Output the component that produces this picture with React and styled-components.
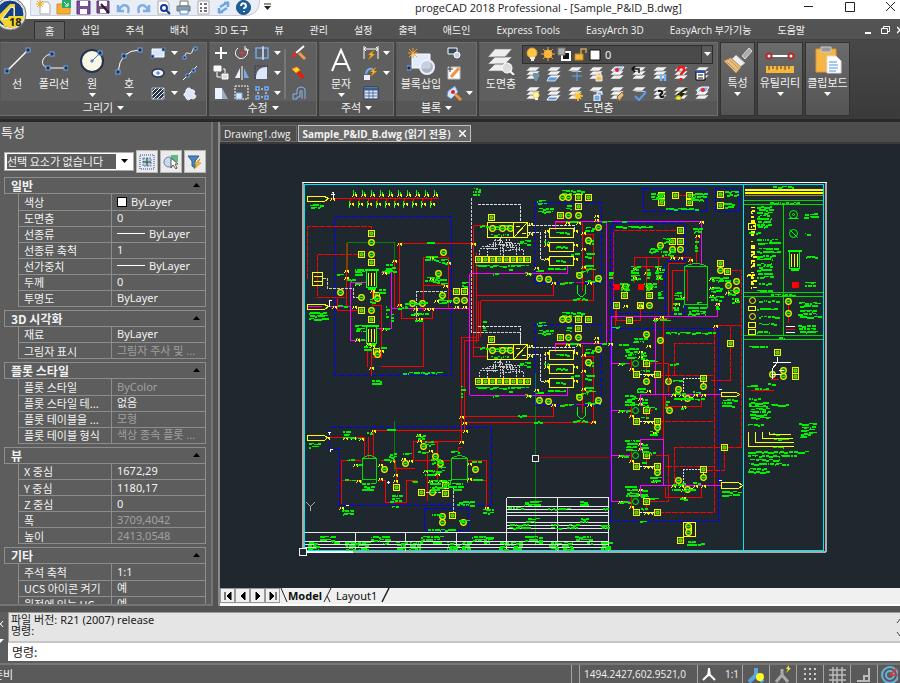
import React from "react";
import styled, { createGlobalStyle, css } from "styled-components";

const latin = '"Noto Sans", "Noto Sans CJK KR", sans-serif';
const compact = '"Open Sans", "Noto Sans CJK KR", sans-serif';
const korean = '"Noto Sans CJK KR", "Noto Sans", sans-serif';

const Global = createGlobalStyle`
  *, *::before, *::after { box-sizing: border-box; }
  html, body { margin: 0; background: #535353; }
  button, select, input { font: inherit; color: inherit; border: 0; padding: 0; margin: 0; background: none; border-radius: 0; }
  svg { display: block; flex: none; }
`;

/* ---------- shell ---------- */

const Shell = styled.div`
  display: grid;
  grid-template-rows: 19px 21px 82px minmax(0, 1fr) 51px 20px;
  height: 100vh;
  overflow: hidden;
  color: #f2f2f2;
  font: 11px/16px ${latin};
`;

const TitleBar = styled.header`
  position: relative;
  display: flex;
  align-items: flex-start;
  background: #fff;
  color: #222;
`;
const AppButton = styled.button`
  position: absolute;
  z-index: 2;
  left: -7px;
  top: -4px;
`;
const QuickAccess = styled.div`
  display: flex;
  align-items: center;
  gap: 5px;
  height: 16px;
  margin-left: 30px;
  padding: 0 8px 0 5px;
  background: #e9edf5;
  border: 1px solid #c9ced8;
  border-top: 0;
  border-radius: 0 0 14px 0;
`;
const QuickCaret = styled.button`
  margin: 3px 0 0 4px;
`;
const Title = styled.h1`
  flex: 1;
  margin: 0;
  padding-left: 144px;
  font: 11px/15px ${compact};
  white-space: nowrap;
`;
const WindowButtons = styled.div`
  display: flex;
  gap: 28px;
  padding-right: 3px;
`;

const TabStrip = styled.nav`
  display: flex;
  align-items: flex-end;
  padding-left: 34px;
  background: #535353;
  border-bottom: 1px solid #444;
  overflow: hidden;
  font: 10px/16px ${compact};
`;
const RibbonTab = styled.button`
  height: 18px;
  padding: 0 13px !important;
  line-height: 16px;
  white-space: nowrap;
  ${(p) =>
    p.$active &&
    css`
      padding: 0 10px !important;
      margin-right: 3px !important;
      background: #5f5f5f !important;
      border: 1px solid #303030 !important;
      border-bottom: 0 !important;
    `}
`;
const MdiButtons = styled.div`
  display: flex;
  gap: 7px;
  margin-left: auto;
  padding-bottom: 4px;
`;

const Ribbon = styled.div`
  display: flex;
  gap: 2px;
  padding: 2px 0 3px;
  background: linear-gradient(#484848, #3a3a3a);
  border-bottom: 3px solid #292929;
`;
const Panel = styled.section`
  display: flex;
  flex-direction: column;
  flex: none;
  width: ${(p) => p.$w}px;
  background: #5f5f5f;
  border: 1px solid #6f6f6f;
  border-left-color: #575757;
`;
const PanelBody = styled.div`
  flex: 1;
  display: flex;
  min-height: 0;
`;
const PanelTitle = styled.button`
  height: 14px;
  line-height: 14px;
  background: #565656 !important;
  display: flex;
  align-items: center;
  justify-content: center;
  gap: 4px;
`;
const BigTool = styled.button`
  width: ${(p) => p.$w || 38}px;
  flex: none;
  height: 60px;
  display: flex;
  flex-direction: column;
  align-items: center;
  white-space: nowrap;
  line-height: 14px;
  gap: 2px;
  padding-top: 4px !important;
`;
const IconGrid = styled.div`
  display: grid;
  grid-template-columns: ${(p) => p.$cols};
  grid-auto-rows: 20px;
  place-items: center;
  height: 60px;
`;
const Sep = styled.i`
  width: 2px;
  height: 50px;
  margin: 6px 4px 0 0;
  background: #777;
`;
const LayerTools = styled.div`
  flex: 1;
  padding-right: 4px;
`;
const LayerBox = styled.label`
  display: flex;
  align-items: center;
  gap: 1px;
  height: 19px;
  margin: 2px 0 0;
  padding-left: 2px;
  background: #4a4a4a;
  border: 1px solid #2d2d2d;
  select { flex: 1; appearance: none; padding-left: 3px; font: 11px/16px ${latin}; }
`;
const DropMark = styled.span`
  display: grid;
  place-items: center;
  width: 11px;
  height: 17px;
  background: #5a5a5a;
  border-left: 1px solid #2d2d2d;
`;
const TallTool = styled.button`
  display: flex;
  flex-direction: column;
  align-items: center;
  flex: none;
  width: ${(p) => p.$w}px;
  gap: 2px;
  padding-top: 3px !important;
  line-height: 14px;
  white-space: nowrap;
  background: linear-gradient(#6b6b6b, #545454) !important;
  border: 1px solid #333 !important;
`;

/* ---------- work area ---------- */

const Work = styled.div`
  display: grid;
  grid-template-columns: 213px minmax(0, 1fr);
  column-gap: 5px;
  min-height: 0;
  padding-bottom: 6px;
  background: #535353;
`;
const Props = styled.aside`
  display: flex;
  flex-direction: column;
  min-height: 0;
  overflow: hidden;
  padding: 0 5px 0 4px;
  background: #5d5d5d;
  border-right: 2px solid #757575;
  border-bottom: 2px solid #757575;
  font: 11px/15px ${korean};
`;
const PropsTitle = styled.h2`
  margin: 0 0 0 -3px;
  font: 13px/20px ${korean};
  height: 28px;
  flex: none;
`;
const PickRow = styled.div`
  display: flex;
  flex: none;
  gap: 2px;
  margin-bottom: 4px;
`;
const PickBox = styled.label`
  display: flex;
  flex: 1;
  align-items: center;
  height: 19px;
  margin: 2px 0 0;
  background: #fff;
  border: 1px solid #aaa;
  select { flex: 1; min-width: 0; appearance: none; height: 15px; margin: 0 0 0 2px; line-height: 15px; background: #5d5d5d; }
  svg { margin: 0 5px; }
`;
const PickButton = styled.button`
  display: grid;
  place-items: center;
  width: 22px;
  height: 23px;
  background: #eceaea !important;
  border: 1px solid #b5b5b5 !important;
`;
const Group = styled.section`
  margin-bottom: 3px;
  flex: none;
`;
const GroupHead = styled.button`
  display: flex;
  justify-content: space-between;
  align-items: center;
  width: 100%;
  height: 17px;
  padding: 0 5px 0 6px !important;
  font-weight: 700 !important;
  font-size: 12px !important;
  border: 1px solid #8d8d8d !important;
`;
const Grid = styled.table`
  width: calc(100% - 14px);
  margin-left: 14px;
  table-layout: fixed;
  border-collapse: collapse;
  th, td {
    height: 16px;
    padding: 0 0 0 5px;
    border: 1px solid #8d8d8d;
    border-top: 0;
    font-weight: 400;
    line-height: 14px;
    text-align: left;
    white-space: nowrap;
    overflow: hidden;
    text-overflow: ellipsis;
  }
  th { width: 93px; }
`;
const Value = styled.td`
  color: ${(p) => (p.$dim ? "#a0a0a0" : "#f2f2f2")};
  font-family: ${latin};
`;
const Swatch = styled.i`
  display: inline-block;
  width: 10px;
  height: 10px;
  margin-right: 4px;
  vertical-align: -1px;
  background: #fff;
  border: 1px solid #000;
`;
const Rule = styled.i`
  display: inline-block;
  width: 28px;
  height: 1px;
  margin-right: 4px;
  vertical-align: 4px;
  background: #fff;
`;

const Doc = styled.main`
  display: grid;
  grid-template-rows: 22px minmax(0, 1fr) 18px;
  min-height: 0;
  border-left: 2px solid #8a8a8a;
`;
const DocTabs = styled.div`
  display: flex;
  align-items: flex-end;
  background: #4d4d4d;
  border-bottom: 2px solid #3a3a3a;
  font: 10px/16px ${compact};
`;
const DocTab = styled.button`
  display: flex;
  align-items: center;
  gap: 8px;
  height: 17px;
  padding: 0 6px 0 3px !important;
  line-height: 16px;
  white-space: nowrap;
  border: 1px solid #6a6a6a !important;
  ${(p) =>
    p.$active &&
    css`
      margin-left: 1px !important;
      padding: 0 4px 0 3px !important;
      font-weight: 700 !important;
      background: #686868 !important;
      border-color: #c0c0c0 !important;
    `}
`;
const Canvas = styled.div`
  min-height: 0;
  overflow: hidden;
  background: #1f272f;
  svg { width: 100%; height: 100%; }
`;
const LayoutTabs = styled.div`
  display: flex;
  align-items: flex-start;
  background: #f0f0f0;
  color: #111;
  border-bottom: 2px solid #fff;
`;
const NavButton = styled.button`
  display: grid;
  place-items: center;
  width: 15px;
  height: 15px;
  border: 1px solid #999 !important;
  background: #f0f0f0 !important;
`;
const LayoutTab = styled.button`
  height: 15px;
  line-height: 15px;
  font-weight: ${(p) => (p.$active ? 700 : 400)} !important;
`;

const Command = styled.section`
  display: grid;
  grid-template-columns: 8px minmax(0, 1fr);
  grid-template-rows: 31px 18px;
  padding-bottom: 2px;
  background: #5d5d5d;
  color: #222;
  font: 11px/11px ${latin};
`;
const CommandGrip = styled.div`
  grid-row: span 2;
  display: flex;
  flex-direction: column;
  gap: 12px;
  padding-top: 9px;
`;
const History = styled.output`
  display: flex;
  justify-content: space-between;
  padding: 1px 0 0 2px;
  white-space: pre;
  background: #e5e5e5;
  border: 1px solid #999;
  border-right: 0;
  border-bottom: 2px solid #c6c6c6;
`;
const Prompt = styled.label`
  display: flex;
  align-items: center;
  padding-left: 4px;
  background: #fff;
  font: 12px/16px ${korean};
  input { flex: 1; outline: 0; }
`;
const Status = styled.footer`
  display: flex;
  align-items: stretch;
  background: #5a5a5a;
  border-top: 2px solid #777;
  overflow: hidden;
`;
const Ready = styled.span`
  flex: 1;
  margin-left: -7px;
  font: 11px/18px ${korean};
`;
const StatusCell = styled.button`
  display: flex;
  align-items: center;
  justify-content: ${(p) => (p.$coord ? "flex-start" : "center")};
  flex: none;
  gap: 8px;
  width: ${(p) => p.$w}px;
  padding-left: ${(p) => (p.$coord ? 4 : 0)}px !important;
  border-left: 1px solid #a5a5a5 !important;
  font: 10px/16px ${compact} !important;
  white-space: nowrap;
`;

/* ---------- icons ---------- */

const Svg = ({ s = 16, w, h, children }) => (
  <svg width={w || s} height={h || s} viewBox={`0 0 ${w || s} ${h || s}`} fill="none" stroke="#fff" aria-hidden="true">
    {children}
  </svg>
);
const Caret = ({ c = "#fff", up }) => (
  <Svg w={7} h={5}><path d={up ? "M0 4h7L3.500 0z" : "M0 0h7L3.500 4z"} fill={c} stroke="none" /></Svg>
);
const Grip = ({ x, y }) => <rect x={x - 2} y={y - 2} width="4" height="4" fill="#222c40" stroke="#6ba6f5" />;

const LineIcon = () => <Svg s={28}><path d="M4 24L24 4" strokeWidth="1.500" /><Grip x={4} y={24} /><Grip x={25} y={3} /></Svg>;
const PolyIcon = () => <Svg s={28}><path d="M12 7C1 8-1 20 9 21H26" /><Grip x={12} y={7} /><Grip x={8} y={21} /><Grip x={26} y={21} /></Svg>;
const CircleIcon = () => <Svg s={28}><circle cx="14" cy="14" r="11" fill="#f8f6e4" stroke="#26334c" strokeWidth="2" /><path d="M14 14l7-7M12 14h4M14 12v4" stroke="#3b75bb" /><Grip x={22} y={6} /></Svg>;
const ArcIcon = () => <Svg s={28}><path d="M3 25Q5 3 25 3" /><Grip x={3} y={25} /><Grip x={9} y={9} /><Grip x={25} y={3} /></Svg>;
const RectI = () => <Svg><path d="M2 4h12v8H2z" fill="#d6e5fb" /><path d="M12 3h3v3h-3zM1 10h3v3H1z" fill="#222c40" stroke="#6ba6f5" strokeWidth=".7" /></Svg>;
const SplineI = () => <Svg><path d="M3 13C3 3 8 12 10 7s1-4 4-4" /><path d="M1 11h3v3H1zM12 2h3v3h-3z" fill="#222c40" stroke="#6ba6f5" /></Svg>;
const EllipseI = () => <Svg><ellipse cx="8" cy="8" rx="6" ry="4" fill="#edf4ff" stroke="#29364d" strokeWidth="1.500" /><path d="M8 6v4M6 8h4" stroke="#3277c9" /></Svg>;
const XLineI = () => <Svg><path d="M1 15L15 1" /><path d="M4 9h3v3H4zM10 4h3v3h-3z" fill="#222c40" stroke="#6ba6f5" /></Svg>;
const HatchI = () => <Svg><path d="M2 3h12v11H2z" fill="#26334c" stroke="#dce6f5" strokeWidth=".7" /><path d="M2 7l4-4M2 11l8-8M3 14L14 3M7 14l7-7M11 14l3-3" /></Svg>;
const CloudI = () => <Svg><path d="M4 12c-4-2-1-5 0-4-1-6 5-6 5-3 5-1 4 4 2 4 6 1 1 7-2 4-2 3-5 2-5-1z" fill="#d9e6fb" /></Svg>;
const MoveI = () => <Svg><path d="M8 2v12M2 8h12" strokeWidth="2" /></Svg>;
const RotateI = () => <Svg><path d="M4 3c-7 6 2 15 8 8 2-2 2-6 0-8" /><path d="M8 5v6M5 8h6" stroke="#f33" /><path d="M11 1v4h4" /></Svg>;
const TrimI = () => <Svg><path d="M2 3h7v10H2zM9 3h5v10H9" stroke="#6fa8ee" strokeWidth="1.500" /><path d="M9 1v14" /></Svg>;
const CopyI = () => <Svg><path d="M1 1h7v5H1z" fill="#fff" /><path d="M9 9h6v5H9z" fill="#ddd" /><path d="M4 7v5h4M10 4h2v4" /></Svg>;
const MirrorI = () => <Svg><path d="M6 3v10H1z" fill="#eaf1fd" stroke="none" /><path d="M10 3v10h5z" fill="#78a9e7" stroke="none" /><path d="M8 1v14" /></Svg>;
const FilletI = () => <Svg><path d="M2 14V11Q3 2 13 2v12z" fill="#dbe7fa" stroke="none" /><path d="M1 14V1h13" stroke="#263b5a" strokeDasharray="2 1" /></Svg>;
const StretchI = () => <Svg><path d="M2 3h7v11H2z" fill="#edf3ff" stroke="none" /><path d="M9 3l6 11H9" fill="#9aabc2" stroke="none" /></Svg>;
const ScaleI = () => <Svg><path d="M1 1h13v13H1z" strokeDasharray="2 1" /><path d="M2 8h6v6H2z" fill="#d9e8ff" stroke="#78a9e7" /></Svg>;
const ArrayI = () => <Svg><path d="M2 2h3v3H2zM11 2h3v3h-3zM2 11h3v3H2zM11 11h3v3h-3z" fill="#27446f" stroke="#75acf4" strokeWidth="1.500" /><path d="M7 4h2M7 12h2M4 7v2M12 7v2" /></Svg>;
const EraseI = () => <Svg><path d="M8 8l6 6" stroke="#f6984c" strokeWidth="3" /><path d="M5 8l8-7" stroke="#fff" strokeWidth="2" /><path d="M1 12l4-4" stroke="#e32c25" strokeWidth="3" /></Svg>;
const ExplodeI = () => <Svg><path d="M4 3l8 10" stroke="#d21" strokeWidth="4" /><path d="M1 4l5-2 3 3-4 3z" fill="#ffd22e" stroke="#f80" /></Svg>;
const OffsetI = () => <Svg><path d="M2 14V9h4V4q4-4 8 0v10M6 14v-2h3V6q2-1 2 0v8M2 14h4" stroke="#87b7f2" /></Svg>;
const TextA = () => <Svg s={28}><path d="M5 24L14 3l9 21M8 17h12" strokeWidth="2" /></Svg>;
const Bolt = ({ x = 8, y = 5 }) => <path d={`M${x + 4} ${y}l-6 5h3l-3 5 7-6h-3z`} fill="#ffc22e" stroke="#b16c00" strokeWidth=".5" />;
const DimI = () => <Svg><path d="M1 1v13M15 1v13M1 4h14M3 2L1 4l2 2M13 2l2 2-2 2" /><Bolt x={7} y={5} /></Svg>;
const LeaderI = () => <Svg><path d="M1 10h6v5H1z" fill="#e6effc" stroke="none" /><path d="M3 9q1-6 7-5" stroke="#75adf2" strokeWidth="2" /><Bolt x={9} y={2} /></Svg>;
const TableI = () => <Svg><path d="M1 2h14v12H1z" fill="#dce8fa" stroke="#263958" /><path d="M1 4h14" stroke="#3b5f93" strokeWidth="3" /><path d="M2 8h12M2 11h12M6 5v9M10 5v9" stroke="#5b7298" /></Svg>;
const BlockBig = () => <Svg s={28}><path d="M5 7h18v14H5z" fill="#dfeafa" /><circle cx="20" cy="20" r="7" fill="#becbdc" fillOpacity=".8" stroke="#eef" strokeWidth="2" /><path d="M6 1v10M1 6h10M2 2l8 8M10 2l-8 8" stroke="#f9a42f" /><Grip x={2} y={21} /></Svg>;
const BlockI = () => <Svg><path d="M2 3h9v6H2z" fill="#37465f" /><circle cx="11" cy="10" r="3" fill="#c6d2e2" /></Svg>;
const EditI = () => <Svg><path d="M2 2h12v12H2z" fill="#fff" stroke="#bbb" /><path d="M5 12l8-9" stroke="#f2913d" strokeWidth="3" /><path d="M4 1v6M2 4h5" stroke="#333" /></Svg>;
const AttrI = () => <Svg><path d="M2 6l7-5 3 6-7 7-4-3z" fill="#d6e5fc" stroke="#5e91dc" /><circle cx="7" cy="7" r="2" fill="#d22" stroke="none" /><path d="M9 9l6 6" stroke="#f2913d" strokeWidth="3" /></Svg>;
const sheets = (
  <g fill="#f1f1f1" stroke="#606060" strokeWidth=".5">
    <path d="M1 13l4-4h10l-4 4z" /><path d="M1 9l4-4h10l-4 4z" /><path d="M1 5l4-4h10l-4 4z" />
  </g>
);
const LayersBig = () => <Svg s={28}><g fill="#eee" stroke="#777" strokeWidth=".6"><path d="M1 24l7-7h17l-7 7zM1 17l7-7h17l-7 7zM1 10l7-8h17l-7 8z" /></g><circle cx="20" cy="21" r="5" fill="#ddd" /><path d="M23 24l4 4" strokeWidth="2" /></Svg>;
const layerMarks = [
  <path d="M8 7h6v3l-2 5h-2l-2-5z" fill="#6e94a8" stroke="none" />,
  <path d="M3 11h9l-3 4H1z" fill="#5c9bea" stroke="#fff" strokeWidth=".7" />,
  <g><path d="M0 6h16v10H0z" fill="#5f5f5f" stroke="none" /><path d="M10 5v10M5 10h10" stroke="#61a7ff" /></g>,
  <path d="M8 10h6v5H8zM9 10V7h4v3" fill="#f5c35e" stroke="#eee" />,
  <g><path d="M3 5l3-4h9l-3 4z" fill="#8ab6ef" /><circle cx="8" cy="4" r="2" fill="#e22" stroke="none" /></g>,
  <path d="M1 3h7v4M4 0L1 3l3 3" stroke="#111" strokeWidth="1.500" />,
  <path d="M9 8v7M13 8v7" stroke="#77b3ef" strokeWidth="2.500" />,
  <path d="M5 5c0-5 7-5 6-1 0 3-3 2-3 5M8 12v3" stroke="#f11" strokeWidth="2.500" />,
  <g><path d="M2 5h9v9H2z" fill="#fff" stroke="#000" /><path d="M2 6h9" stroke="#1559c8" strokeWidth="2" /><path d="M4 9h5M4 12h5" stroke="#111" /></g>,
  <g><circle cx="11" cy="9" r="3" fill="#fff5a4" stroke="#e9d75a" /><path d="M10 13h3" strokeWidth="2" /></g>,
  <path d="M3 11h9l-2 3H1z" fill="#4f92e3" />,
  <path d="M11 6v9M7 10h9M8 7l6 6M14 7l-6 6" stroke="#ffc52e" strokeWidth="1.500" />,
  <g><path d="M0 6h16v10H0z" fill="#5f5f5f" stroke="none" /><path d="M6 9h6v6H6zM9 9V6h5v3" fill="#79a9e5" /></g>,
  <path d="M13 6l-5 5 2 4 5-6z" fill="#e7bd7e" stroke="#8b673b" />,
  <g><path d="M0 6h16v10H0z" fill="#5f5f5f" stroke="none" /><path d="M4 10l4 4 7-8" stroke="#5a9dee" strokeWidth="2" /></g>,
  <path d="M6 5c5-1 5 2 3 3s0 5 3 2" stroke="#111" strokeWidth="2" />,
  <g><path d="M14 2L6 8h4l-4 4" stroke="#242400" strokeWidth="2" /><path d="M3 10h5v4H3z" fill="#ee3" stroke="#440" strokeWidth=".5" /></g>,
  <g><path d="M3 6l4-5h8l-3 5z" fill="#80aeea" /><circle cx="9" cy="4" r="2" fill="#e22" stroke="none" /></g>,
];
const LayerI = ({ n }) => <Svg>{sheets}{layerMarks[n]}</Svg>;
const BrushI = () => <Svg s={28}><path d="M18 10l7-8 3 3-7 8z" fill="#aaa" stroke="#ddd" /><path d="M12 9l9 8-5 4-8-8z" fill="#eee" stroke="#aaa" /><path d="M7 12l10 9-5 6L0 15z" fill="#e5bd7e" stroke="#b98e50" /><path d="M3 16l8 8M6 14l8 8" stroke="#bd9459" /></Svg>;
const RulerI = () => <Svg w={32} h={28}><path d="M6 10h20" strokeWidth="2" /><circle cx="5" cy="10" r="2.500" fill="#fff" stroke="#b82727" strokeWidth="2" /><circle cx="27" cy="10" r="2.500" fill="#fff" stroke="#b82727" strokeWidth="2" /><path d="M2 20h28v7H2z" fill="#f6b83f" stroke="none" /><path d="M5 20v4M9 20v3M13 20v4M17 20v3M21 20v4M25 20v3" stroke="#554123" /></Svg>;
const ClipI = () => <Svg s={28}><path d="M2 3h20v23H2z" fill="#f6b547" stroke="#dc982c" /><path d="M7 1h10v5H7z" fill="#999" stroke="#ccc" /><path d="M13 10h9l5 5v12H13z" fill="#fff" stroke="#ddd" /><path d="M15 16h8M15 19h9M15 22h9M15 25h7" stroke="#4c92df" /></Svg>;

const quick = [
  ["New", <Svg s={15}><path d="M4 2h8l2 3v9H4z" fill="#fff" stroke="#aaa" /><path d="M4 0v8M0 4h8M1 1l6 6M7 1L1 7" stroke="#f0ae1d" /></Svg>],
  ["Open", <Svg s={15}><path d="M1 4h6l1 2h6v8H1z" fill="#f7af33" stroke="#d48a1d" /><path d="M6 0h9v8H6z" fill="#24ac68" stroke="none" /><path d="M8 2l4 4M12 3v3H9" /></Svg>],
  ["Save", <Svg s={15}><path d="M1 1h13v13H1z" fill="#7b4f96" stroke="#5b3377" /><path d="M4 1h8v5H4zM4 9h7v5H4z" fill="#fff" stroke="none" /></Svg>],
  ["Save as", <Svg s={15}><path d="M1 1h12v12H1z" fill="#765084" stroke="#5b3377" /><path d="M3 1h8v5H3zM4 9h6v4H4z" fill="#fff" stroke="none" /><path d="M5 4l8 9" stroke="#222" strokeWidth="2" /></Svg>],
  ["Undo", <Svg s={15}><path d="M2 5v6h6M3 10c4-8 12-5 9 3" stroke="#7eade6" strokeWidth="2.500" /></Svg>],
  ["Redo", <Svg s={15}><path d="M13 5v6H7M12 10C8 2 0 5 3 13" stroke="#7eade6" strokeWidth="2.500" /></Svg>],
  ["Preview", <Svg s={15}><path d="M2 1h9l2 3v10H2z" fill="#fff" stroke="#aaa" /><circle cx="8" cy="8" r="3" stroke="#123c93" strokeWidth="2" /><path d="M10 10l4 4" stroke="#123c93" strokeWidth="2" /></Svg>],
  ["Print", <Svg s={15}><path d="M4 1h8v5H4z" fill="#fff" stroke="#777" /><path d="M1 6h13v5H1z" fill="#8d99a4" stroke="#6a7782" /><path d="M4 10h8v4H4z" fill="#fff" stroke="#4991d5" /></Svg>],
  ["Options", <Svg s={15}><path d="M2 1h11v13H2z" fill="#fff" stroke="#aaa" /><path d="M4 4h2M4 8h2M4 11h2M8 4h3M8 8h3M8 11h3" stroke="#445" strokeWidth="1.500" /></Svg>],
  ["Sync", <Svg s={15}><path d="M8 3h4v4M4 7l8-5M7 12H3V8M11 8l-8 5" stroke="#6ba5e4" strokeWidth="2.500" /></Svg>],
  ["Help", <Svg s={15}><circle cx="7.500" cy="7.500" r="7" fill="#1d5f9a" stroke="#174b7c" /><path d="M5 6c0-4 5-3 5 0 0 2-2 1-2 3M8 11v1" strokeWidth="2" /></Svg>],
];

/* ---------- drawing ---------- */

const noise = (n) => {
  const v = Math.sin(n * 12.9898) * 43758.5453;
  return v - Math.floor(v);
};
const scribble = ([x, y, w, h = 2]) => {
  let d = "";
  for (let r = 0; r < h; r += 3) {
    let cx = x + Math.floor(noise(x + y + r) * Math.min(3, w / 4));
    const end = x + w - Math.floor(noise(x * 3 + r * 7 + y) * w * 0.2);
    while (cx < end) {
      const k = cx * 7 + y + r * 13;
      const len = 1 + Math.floor(noise(k) * 4);
      d += `M${cx} ${y + r + (noise(k + 2) > 0.7 ? 1 : 0)}h${len}v${noise(k + 5) > 0.2 ? 2 : 1}h-${len}z`;
      cx += len + (noise(k + 9) > 0.7 ? 1 : 0);
    }
  }
  return d;
};
const Notes = ({ at, c = "#00f000" }) => <path d={at.map(scribble).join("")} fill={c} stroke="none" />;
const Round = ({ at }) => at.map(([x, y], i) => (
  <g key={i} shapeRendering="geometricPrecision"><circle cx={x} cy={y} r="2.800" fill="#0a7a10" stroke="#f5f500" strokeWidth="1.200" /><path d={`M${x - 1.5} ${y}h3`} stroke="#0f0" /></g>
));
const Boxed = ({ at }) => at.map(([x, y], i) => (
  <g key={i}><path d={`M${x - 3} ${y - 3}h6v6h-6z`} fill="#355b10" stroke="#f5f500" /><circle cx={x} cy={y} r="1.500" fill="#0c0" stroke="#cf0" strokeWidth=".7" shapeRendering="geometricPrecision" /></g>
));
const Valves = ({ at }) => <path d={at.map(([x, y]) => `M${x - 2} ${y - 1}v3l4-3v3z`).join("")} fill="#ff0" stroke="none" />;

const Exchanger = ({ x, y }) => (
  <g>
    <path d={`M${x} ${y}h10v17h-10z`} stroke="#0f0" /><path d={`M${x - 2} ${y - 1}h14M${x + 1} ${y + 18}h8`} stroke="#0f0" strokeWidth="2" />
    <path d={`M${x + 2} ${y + 2}v13M${x + 5} ${y + 2}v13M${x + 8} ${y + 2}v13`} stroke="#ff0" />
  </g>
);
const Tank = ({ x, y, w, h }) => (
  <path d={`M${x} ${y}h${w}v${h}h-${w}zM${x} ${y}q${w / 2}-6 ${w} 0M${x - 1} ${y + h}v3M${x + w} ${y + h}v3`} stroke="#0d0" />
);
const cols = [0, 1, 2, 3, 4, 5, 6, 7];

const Skid = ({ dy }) => (
  <g transform={`translate(0 ${dy})`}>
    <path d="M534 202H601V283H534z" stroke="#00f" strokeDasharray="5 2" />
    <path d="M469 273H567V265M555 229V221H606M540 273v4" stroke="#f0f" />
    <path d="M473 225H487M582 222V290M582 234H593V300M582 268h11M570 282h-8M575 222h-20M575 282h8" stroke="#f00" />
    <path d="M477 204H520V222M527 225H574V230M527 232H540V259H549M545 230V243" stroke="#e0e0e0" strokeDasharray="3 1" />
    <path d="M487 249V244H499V237M493 249V240H502V250H510V244H497M516 254V247H506V238M523 254V249H512V242H504M479 254v-6h16v-11M500 254V237M487 255v-7h10M503 255v-10h14M495 238v12M509 238v5h10v7M481 246h12" stroke="#c8c8c8" strokeDasharray="2 1" />
    <path d="M487 222H527V237H487zM513 222V237M513 237L527 222M549 228H573V237H549zM549 242H573V251H549zM549 256H573V265H549z" stroke="#ff0" />
    <path d="M515 226h4M521 233h4" stroke="#ff0" />
    <path d="M577 284v9q4 6 8 0v-9" stroke="#0f0" />
    <Notes at={[[489, 224, 20, 4], [489, 233, 20, 2], [554, 231, 14, 2], [554, 245, 14, 2], [554, 259, 14, 2], [536, 199, 9, 6], [536, 207, 18, 5], [518, 239, 9, 6], [475, 264, 54, 3], [508, 268, 6, 3], [560, 189, 23, 5], [565, 204, 8, 6], [546, 267, 20, 3], [522, 271, 9, 3], [584, 226, 9, 5], [584, 239, 8, 5], [584, 252, 8, 5], [584, 264, 8, 5], [535, 269, 10, 3], [557, 281, 16, 2], [575, 270, 12, 3], [583, 279, 16, 3], [572, 297, 15, 2], [601, 220, 8, 3], [564, 220, 14, 2], [490, 272, 10, 2], [479, 224, 8, 2], [543, 240, 5, 2], [570, 252, 7, 2]]} />
    <Round at={[[562, 197], [568, 197], [492, 228], [502, 228], [510, 228], [568, 215], [578, 215], [598, 227], [588, 240], [539, 278], [548, 279], [579, 275], [598, 278]]} />
    <Boxed at={[[578, 197], [588, 197], [491, 217], [560, 215], [578, 206], ...cols.map((c) => [478 + c * 7, 259])]} />
    <Valves at={[[596, 215], [596, 219], [546, 230], [546, 244], [546, 258], [575, 230], [575, 244], [575, 258], [583, 232], [583, 248], [583, 266], [553, 282], [589, 282], [536, 267], [530, 223], [530, 233], [528, 273], [567, 222], [578, 222]]} />
  </g>
);

const trainY = [363, 410, 455, 501];
const Train = ({ y }) => (
  <g>
    <path d={`M611 ${y}h18`} stroke="#f0f" />
    <path d={`M631 ${y - 6}v11l4 5M646 ${y + 2}v7M646 ${y}h6`} stroke="#f00" />
    <path d={`M639 ${y + 11}h15`} stroke="#fff" strokeDasharray="2 1" />
    <circle cx="635" cy={y} r="3" stroke="#0f0" shapeRendering="geometricPrecision" />
    <Boxed at={[[646, y], [636, y + 11], [657, y + 11]]} />
    <Valves at={[[620, y], [640, y - 12], [640, y - 7], [650, y + 11], [646, y + 11], [631, y + 5]]} />
    <Notes at={[[624, y - 16, 12, 10], [618, y - 1, 10, 3], [640, y - 12, 7, 8], [640, y + 6, 6, 2], [648, y - 4, 8, 3]]} />
  </g>
);
const Manifold = ({ y }) => (
  <g>
    <path d={`M683 ${y}v-16h20v8`} stroke="#ddd" strokeDasharray="2 1" />
    <path d={`M665 ${y + 1}v11h36v-11M668 ${y - 12}v-20`} stroke="#f00" />
    <Round at={[[678, y - 5], [703, y - 8], [687, y + 4]]} />
    <Boxed at={[[703, y - 16]]} />
    <Valves at={[[673, y], [681, y], [695, y], [703, y], [683, y + 4], [690, y + 3], [683, y + 12]]} />
    <Notes at={[[671, y + 3, 30, 3], [672, y - 3, 10, 3], [679, y + 12, 8, 3], [691, y - 4, 8, 3]]} />
  </g>
);

const pipeTicks = [0, 1, 2, 3, 4, 5, 6, 7, 8, 9];

/* The half-unit origin centres one-unit strokes on whole pixels. */
const Drawing = () => (
  <svg viewBox="219.5 143.5 680 444" preserveAspectRatio="xMidYMid meet" fill="none" shapeRendering="crispEdges" role="img" aria-label="Sample_P&ID_B.dwg">
    <path d="M302 182V551M302 551H825M825 182V551" stroke="#aaa" strokeWidth="2" /><path d="M301 182H826" stroke="#fff" strokeWidth="1" />
    <path d="M304 184H823V550H304zM743 184V550" stroke="#00e5ee" />
    <g stroke="#0000ff" strokeDasharray="6 2">
      <path d="M334 216H451V375H334zM643 188H706V211H643zM715 188H739V211H715z" />
      <path d="M612 223H684V313H612zM610 328H718V521H610zM329 427H491V505H339V449H329zM424 508H468V530H424zM665 263V313M665 261H684M610 225V360" />
    </g>
    <g stroke="#ff0000">
      <path d="M327 198H438M399 307V243H473V225M423 310V257H448V307M423 285H448M401 308V318H432V310M423 321V366H380M367 366V349M371 350V375M346 242V306M337 297V310H360M372 288V305H381V357H371M394 260V307" />
      <path d="M476 252V342M473 225V356H487M480 300V336M476 295H553V282M480 300H593M461 441V337H476M464 430V340H478V300M461 416H553V404M464 422H593V356" />
      <path d="M326 437H364V457M368 436V457M373 457V430H464M413 460V441H461M414 468H395V460H380M360 460H341V503M341 480H360M385 480V502H406V480H416M378 480H385M396 466V482M469 460H486V507M469 480H486M486 460H465M458 451V447H461M414 460H450M427 452V500M424 442H437V480M430 471H440" />
      <path d="M535 457H611" stroke="#a00" />
      <path d="M634 282V257H690V264M646 257V282M658 257V282M634 266H658M668 315V263H684M672 310V270H687V300M696 262V235M675 263H684M616 305V320H640V305M655 361V318H668M663 318V440M656 318H668M615 325V310" />
    </g>
    <g stroke="#f00" strokeDasharray="6 1">
      <path d="M307 278V226H371V233M317 254H358M317 254V297H345M342 310H358M613 300V230H680M714 512V325H741V270H720M674 375V343H714M730 325V380H710M655 363H668V395M657 375H714M657 421H714M657 512H714M665 466H714M674 485V447H741V325M724 447V470H705M655 455H668V501H652M675 195H695" />
    </g>
    <path d="M327 306H350M365 282H350V340H365M380 272H391V328H376M391 308H469M469 273V394M606 221V343H600M606 221H701V264M611 501V316H717V302M640 405V394H721M640 450V439H663V485M640 496V485H721M655 316V394M307 306h14" stroke="#f0f" />
    <path d="M347 270V242H394V260M535 372V545M394 420V470" stroke="#008500" />
    <path d="M471 197V332H520V343M322 278H327V288H353V297H360M416 320V291H447M453 486V512M421 492H445" stroke="#ccc" strokeDasharray="3 1" />
    <g stroke="#ff0">
      <path d="M307 196H324L328 198L324 201H307zM307 304H324L328 306L324 309H307zM307 435H324L327 437L324 440H307zM721 392H736L739 394L736 396H721zM721 482H738L742 485L738 488H721z" />
      <path d="M312 272H322V285H312zM683 522H695V536H683z" />
      <path d="M313 276h8M313 281h8M686 525h5v8h-5z" />
    </g>
    <path d={pipeTicks.map((i) => `M${353 + i * 9} 189v6M${349 + i * 9} 200v7M${355 + i * 9} 191v2`).join("")} stroke="#0f0" strokeWidth="1.500" />
    <Valves at={pipeTicks.map((i) => [354 + i * 9, 194]).concat(pipeTicks.map((i) => [351 + i * 9, 203]))} />
    <path d={pipeTicks.map((i) => `M${354 + i * 9} 196v2M${350 + i * 9} 198v3`).join("")} stroke="#f00" />

    <Exchanger x={366} y={270} /><Exchanger x={366} y={326} />
    <Boxed at={[[371, 233], [361, 254], [371, 262], [361, 310], [371, 319], [456, 291], [464, 291], [376, 295], [376, 351]]} />
    <Round at={[[371, 242], [371, 254], [371, 310], [340, 292], [361, 297], [443, 252], [438, 273], [442, 295], [412, 303], [422, 303], [456, 300], [464, 300], [377, 298], [377, 354]]} />
    <Valves at={[[346, 270], [394, 260], [346, 277], [372, 290], [334, 306], [384, 272], [384, 328], [357, 283], [357, 339], [431, 257], [448, 262], [431, 278], [445, 285], [436, 300], [448, 300], [399, 304], [415, 308], [426, 308], [431, 308], [416, 313], [420, 318], [456, 306], [464, 306], [368, 343], [372, 345], [381, 350], [399, 243], [473, 243], [371, 367], [354, 306], [332, 198]]} />
    <Notes at={[[308, 203, 14, 5], [308, 311, 18, 8], [354, 267, 9, 9], [354, 323, 9, 9], [384, 263, 9, 7], [380, 270, 8, 3], [378, 288, 7, 5], [335, 273, 8, 3], [346, 278, 7, 2], [354, 281, 8, 2], [354, 337, 8, 2], [424, 255, 12, 6], [424, 276, 12, 6], [438, 258, 10, 5], [434, 278, 12, 5], [437, 298, 12, 6], [406, 301, 22, 3], [408, 312, 18, 3], [414, 319, 9, 2], [425, 241, 9, 2], [460, 281, 8, 6], [390, 313, 2, 8], [335, 304, 12, 2], [378, 346, 8, 3], [362, 345, 8, 4], [400, 371, 49, 2], [371, 379, 9, 6], [472, 187, 7, 7], [397, 306, 10, 2], [381, 327, 9, 2], [404, 302, 2, 4], [369, 297, 5, 6], [385, 305, 2, 12], [482, 320, 2, 12], [460, 385, 2, 12]]} />

    <Skid dy={0} /><Skid dy={122} />

    <Tank x={362} y={458} w={14} h={21} /><Tank x={451} y={458} w={16} h={21} /><Tank x={684} y={266} w={23} h={38} />
    <Round at={[[384, 469], [405, 463], [423, 446], [435, 456], [440, 463], [475, 469], [432, 492], [442, 516], [442, 522], [463, 522]]} />
    <Boxed at={[[421, 492], [445, 485], [445, 493], [452, 515], [396, 487]]} />
    <Valves at={[[327, 437], [345, 437], [353, 437], [361, 438], [373, 430], [355, 464], [358, 480], [380, 464], [380, 478], [395, 474], [395, 480], [403, 458], [418, 434], [419, 440], [430, 450], [425, 470], [430, 480], [437, 473], [440, 480], [469, 463], [469, 478], [341, 507], [486, 507], [461, 441], [461, 416], [464, 422], [465, 430], [593, 421], [392, 460], [410, 460]]} />
    <Notes at={[[307, 442, 13, 5], [342, 430, 8, 8], [348, 436, 15, 3], [366, 431, 8, 3], [344, 458, 11, 3], [344, 478, 12, 3], [355, 463, 6, 3], [383, 458, 13, 2], [388, 452, 9, 5], [401, 452, 8, 3], [416, 434, 9, 4], [424, 440, 10, 4], [416, 450, 12, 3], [430, 458, 11, 4], [436, 466, 8, 4], [423, 469, 16, 4], [427, 479, 12, 4], [428, 485, 10, 4], [439, 479, 10, 7], [361, 482, 14, 8], [391, 494, 9, 5], [450, 482, 14, 8], [456, 500, 20, 5], [341, 509, 10, 5], [482, 508, 10, 6], [430, 513, 12, 2], [457, 519, 12, 3], [427, 528, 28, 2], [385, 428, 11, 2], [450, 450, 10, 2], [470, 460, 10, 2], [470, 478, 10, 3], [410, 480, 7, 2], [516, 414, 10, 2], [532, 420, 12, 2], [389, 499, 10, 2], [391, 505, 8, 2]]} />

    <Boxed at={[[661, 195], [689, 195], [675, 195], [661, 202], [689, 202], [720, 194], [720, 205], [680, 230], [672, 241], [680, 241], [720, 263], [727, 271], [616, 305], [640, 305], [624, 295], [649, 295], [629, 320], [730, 343], [724, 447], [680, 540], [657, 466], [657, 421]]} />
    <Round at={[[672, 249], [680, 249], [660, 245], [720, 270], [736, 281], [736, 290], [728, 285], [625, 286], [649, 286], [649, 305], [646, 334], [660, 340], [646, 381], [668, 381], [657, 427], [657, 472], [669, 410], [688, 526], [688, 532]]} />
    <path d="M613 283h6v6h-6zM637 283h6v6h-6zM791 281h7v6h-7z" fill="#f00" />
    <Valves at={[[634, 268], [634, 277], [658, 268], [658, 277], [646, 272], [690, 259], [672, 257], [680, 257], [697, 235], [711, 278], [711, 287], [711, 295], [727, 292], [736, 300], [677, 303], [682, 297], [655, 318], [661, 316], [717, 303], [715, 325], [648, 345], [648, 390], [654, 432], [654, 480], [625, 305], [640, 305], [610, 343], [701, 221]]} />
    <Notes at={[[650, 192, 14, 7], [690, 192, 14, 7], [664, 207, 32, 3], [724, 190, 14, 6], [722, 202, 12, 6], [613, 225, 48, 2], [620, 220, 7, 2], [692, 227, 9, 6], [694, 240, 2, 12], [662, 237, 8, 6], [648, 247, 12, 6], [660, 250, 14, 4], [630, 265, 8, 14], [654, 265, 8, 14], [646, 267, 3, 12], [619, 282, 9, 8], [643, 282, 12, 8], [657, 290, 4, 8], [673, 291, 9, 8], [672, 302, 6, 10], [687, 306, 18, 8], [696, 301, 5, 3], [709, 276, 12, 4], [709, 286, 12, 4], [709, 295, 12, 4], [719, 276, 10, 5], [727, 289, 10, 5], [731, 297, 6, 6], [664, 331, 50, 2], [632, 337, 14, 4], [618, 343, 10, 2], [652, 318, 18, 3], [611, 325, 8, 3], [608, 270, 3, 9], [715, 304, 3, 6], [721, 398, 13, 7], [721, 490, 17, 5], [686, 540, 9, 6], [697, 542, 8, 2], [638, 519, 8, 2], [668, 362, 8, 3], [672, 379, 8, 3], [635, 387, 10, 4], [648, 430, 10, 6], [648, 476, 10, 6], [664, 400, 2, 8]]} />
    {trainY.map((y) => <Train key={y} y={y} />)}
    <Manifold y={394} /><Manifold y={485} />

    <path d="M743 200H822M743 204H822M743 292H822M743 296H822M743 335H822M743 339H822M783 204V335" stroke="#00d900" />
    <path d="M744 189H822M744 192H822" stroke="#ff0" strokeWidth="2" /><path d="M744 195H822" stroke="#a80" />
    <Notes at={[[772, 185, 24, 2], [767, 201, 34, 2], [770, 293, 28, 2], [776, 336, 10, 2], [756, 205, 15, 19], [756, 225, 13, 3], [748, 231, 12, 3], [756, 238, 22, 4], [756, 247, 23, 4], [756, 254, 17, 6], [756, 262, 16, 8], [756, 272, 15, 6], [756, 282, 13, 3], [756, 289, 15, 2], [803, 212, 14, 6], [803, 232, 8, 3], [803, 255, 15, 3], [803, 281, 12, 6], [756, 299, 20, 3], [756, 307, 21, 3], [756, 315, 22, 3], [756, 322, 20, 3], [756, 330, 14, 3], [797, 301, 23, 5], [797, 309, 22, 8], [797, 324, 20, 9], [746, 345, 22, 3], [746, 384, 14, 2], [753, 387, 18, 3], [746, 397, 15, 3], [748, 401, 22, 18], [768, 403, 24, 2], [746, 423, 18, 3], [770, 432, 15, 2], [772, 437, 14, 2], [772, 445, 12, 2], [797, 422, 15, 3], [799, 426, 9, 12], [808, 422, 5, 12], [745, 450, 62, 3], [747, 454, 50, 3], [748, 458, 34, 3], [748, 462, 42, 3], [746, 467, 24, 4], [766, 382, 8, 3]]} />
    <Notes c="#ff0" at={[[750, 206, 3, 30], [750, 240, 3, 26], [750, 270, 3, 18], [746, 273, 8, 2]]} />
    <path d="M748 223h7v6h-7zM748 306h7v4h-7zM748 322h7v5h-7zM748 329h7v5h-7z" stroke="#ff0" />
    <g shapeRendering="geometricPrecision">
      <circle cx="752" cy="300" r="3" stroke="#ff0" /><circle cx="752" cy="316" r="3" stroke="#ff0" />
      <circle cx="793" cy="214" r="4" stroke="#0f0" /><circle cx="793" cy="233" r="4" stroke="#0f0" /><circle cx="793" cy="214" r="1" stroke="#0f0" /><path d="M788 218h10M789 229l8 8" stroke="#0f0" />
    </g>
    <Exchanger x={789} y={251} />
    <Round at={[[788, 301], [788, 313], [783, 370], [783, 376], [772, 374]]} />
    <Boxed at={[[777, 352], [795, 370], [795, 376]]} />
    <path d="M788 304v5M788 316v6M785 329h9M750 390H773M778 379h-8" stroke="#f00" /><path d="M785 326h9M785 332h9M777 356v6l-5 6v10M772 374h8M778 370h5M772 362H790" stroke="#fff" />
    <path d="M748 431V446H793M755 431V442H793M762 431V438H792M769 431V434H790" stroke="#ff0" />

    <path d="M506 497H608V550M506 497V550M557 497V550M304 532H608M355 532V550M405 532V550M456 532V550M506 506H608M506 509H608M506 512H608M506 515H608M506 522H608M506 525H608M506 528H608M304 541H608M304 544H608M304 547H608" stroke="#e8e8e8" />
    <path d="M302 551H352" stroke="#fff" strokeWidth="2" />
    <Notes at={[0, 1, 2, 3, 4, 5].flatMap((i) => [[318 + i * 51, 535, 20, 4], [306 + i * 51, 541, 12, 8], [330 + i * 51, 541, 7, 3], [344 + i * 51, 541, 11, 8]]).concat([[522, 500, 18, 4], [578, 500, 10, 4], [507, 506, 14, 3], [545, 507, 12, 3], [558, 507, 12, 3], [602, 507, 6, 3], [525, 517, 12, 4], [578, 517, 10, 4], [507, 523, 22, 5], [548, 523, 12, 5], [566, 523, 12, 5], [600, 523, 7, 5]])} />
    <path d="M299 548H306V555H299zM532 455H538V461H532z" fill="#1f272f" stroke="#eee" /><path d="M306 502l4 4l4-4M310 506v4" stroke="#aaa" />
    <path d="M327 432h3M329 431v3M330 448v3M329 449h3M345 505h3M388 480v3M386 482h3M718 389h3M718 480h3M331 192h2v6M330 194h4M329 299v7M328 300h3" stroke="#fff" />
  </svg>
);

/* ---------- page ---------- */

const tabs = ["홈", "삽입", "주석", "배치", "3D 도구", "뷰", "관리", "설정", "출력", "애드인", "Express Tools", "EasyArch 3D", "EasyArch 부가기능", "도움말"];
const groups = [
  ["일반", [["색상", <><Swatch />ByLayer</>], ["도면층", "0"], ["선종류", <><Rule />ByLayer</>], ["선종류 축척", "1"], ["선가중치", <><Rule />ByLayer</>], ["두께", "0"], ["투명도", "ByLayer"]]],
  ["3D 시각화", [["재료", "ByLayer"], ["그림자 표시", "그림자 주사 및 ...", 1]]],
  ["플롯 스타일", [["플롯 스타일", "ByColor", 1], ["플롯 스타일 테...", "없음"], ["플롯 테이블을 ...", "모형", 1], ["플롯 테이블 형식", "색상 종속 플롯 ...", 1]]],
  ["뷰", [["X 중심", "1672,29"], ["Y 중심", "1180,17"], ["Z 중심", "0"], ["폭", "3709,4042", 1], ["높이", "2413,0548", 1]]],
  ["기타", [["주석 축척", "1:1"], ["UCS 아이콘 켜기", "예"], ["원점에 있는 UC...", "예"]]],
];
const Tool = ({ label, icon, w, caret }) => <BigTool $w={w}>{icon}<span>{label}</span>{caret && <Caret />}</BigTool>;
const Small = ({ label, children }) => <button aria-label={label}>{children}</button>;

export default function App() {
  return (
    <Shell>
      <Global />
      <TitleBar>
        <AppButton aria-label="progeCAD">
          <Svg s={36}>
            <circle cx="17" cy="18" r="16" fill="#dedede" stroke="#777" /><circle cx="17" cy="18" r="14" fill="#153f87" stroke="#f4f4f4" />
            <path d="M7 18L17 8h5v12l-5 8-5 2-5-6z" fill="#f5d32f" stroke="none" /><path d="M9 23L18 11l3 1v10z" fill="#174083" stroke="#fff" /><path d="M16 20h15q-2 9-11 12l-10-2z" fill="#f6d629" stroke="none" />
            <text x="16" y="30" fill="#222" stroke="none" fontSize="11" fontWeight="700" fontFamily="Noto Sans">18</text>
          </Svg>
        </AppButton>
        <QuickAccess>{quick.map(([n, i]) => <Small key={n} label={n}>{i}</Small>)}</QuickAccess>
        <QuickCaret aria-label="Customize"><Svg w={7} h={8}><path d="M0 1h7" stroke="#222" /><path d="M0 3h7L3.500 7z" fill="#222" stroke="none" /></Svg></QuickCaret>
        <Title>progeCAD 2018 Professional - [Sample_P&amp;ID_B.dwg]</Title>
        <WindowButtons>
          <Small label="Minimize"><Svg s={13}><path d="M2 6.500h9" stroke="#222" /></Svg></Small>
          <Small label="Maximize"><Svg s={13}><path d="M2.500 2.500h9v9h-9z" stroke="#222" /></Svg></Small>
          <Small label="Close"><Svg s={13}><path d="M2 2l9 9M11 2l-9 9" stroke="#222" /></Svg></Small>
        </WindowButtons>
      </TitleBar>
      <TabStrip>
        {tabs.map((t, i) => <RibbonTab key={t} $active={i === 0}>{t}</RibbonTab>)}
        <MdiButtons>
          <Small label="Minimize drawing"><Svg s={10}><path d="M2 8h6" strokeWidth="2" /></Svg></Small>
          <Small label="Restore drawing"><Svg s={10}><path d="M3.500 3V1.500h6v5H8M1.500 3.500h6v5h-6z" /></Svg></Small>
          <Small label="Close drawing"><Svg w={3} h={10}><path d="M0 2l6 6M6 2L0 8" strokeWidth="1.500" /></Svg></Small>
        </MdiButtons>
      </TabStrip>
      <Ribbon>
        <Panel $w={207}>
          <PanelBody>
            <Tool w={32} label="선" icon={<LineIcon />} /><Tool w={42} label="폴리선" icon={<PolyIcon />} /><Tool w={34} label="원" icon={<CircleIcon />} caret /><Tool w={40} label="호" icon={<ArcIcon />} caret />
            <IconGrid $cols="18px 14px 18px">
              <Small label="사각형"><RectI /></Small><Caret /><Small label="스플라인"><SplineI /></Small>
              <Small label="타원"><EllipseI /></Small><Caret /><Small label="무한선"><XLineI /></Small>
              <Small label="해치"><HatchI /></Small><Caret /><Small label="구름"><CloudI /></Small>
            </IconGrid>
          </PanelBody>
          <PanelTitle>그리기<Caret /></PanelTitle>
        </Panel>
        <Panel $w={108}>
          <PanelBody>
            <IconGrid $cols="22px 20px 19px 13px">
              <Small label="이동"><MoveI /></Small><Small label="회전"><RotateI /></Small><Small label="자르기"><TrimI /></Small><Caret />
              <Small label="복사"><CopyI /></Small><Small label="대칭"><MirrorI /></Small><Small label="모깎기"><FilletI /></Small><Caret />
              <Small label="신축"><StretchI /></Small><Small label="축척"><ScaleI /></Small><Small label="배열"><ArrayI /></Small><Caret />
            </IconGrid>
            <Sep />
            <IconGrid $cols="18px"><Small label="지우기"><EraseI /></Small><Small label="분해"><ExplodeI /></Small><Small label="간격띄우기"><OffsetI /></Small></IconGrid>
          </PanelBody>
          <PanelTitle>수정<Caret /></PanelTitle>
        </Panel>
        <Panel $w={75}>
          <PanelBody>
            <Tool w={42} label="문자" icon={<TextA />} caret />
            <IconGrid $cols="18px 13px"><Small label="치수"><DimI /></Small><Caret /><Small label="지시선"><LeaderI /></Small><Caret /><Small label="표"><TableI /></Small></IconGrid>
          </PanelBody>
          <PanelTitle>주석<Caret /></PanelTitle>
        </Panel>
        <Panel $w={81}>
          <PanelBody>
            <Tool w={48} label="블록삽입" icon={<BlockBig />} />
            <IconGrid $cols="18px 12px"><Small label="블록 작성"><BlockI /></Small><span /><Small label="블록 편집"><EditI /></Small><span /><Small label="속성"><AttrI /></Small><Caret /></IconGrid>
          </PanelBody>
          <PanelTitle>블록<Caret /></PanelTitle>
        </Panel>
        <Panel $w={239}>
          <PanelBody>
            <Tool w={42} label="도면층" icon={<LayersBig />} />
            <LayerTools>
              <LayerBox>
                <Svg s={15}><circle cx="7" cy="6" r="5" fill="#ffc64a" stroke="#e79d24" /><path d="M5 11h5M6 13h3" stroke="#eee" strokeWidth="2" /></Svg>
                <Svg s={15}><circle cx="7" cy="7" r="4" fill="#ffc95b" stroke="#f5a72f" /><path d="M7 0v14M0 7h14M2 2l10 10M12 2L2 12" stroke="#f5a72f" /></Svg>
                <Svg s={15}><path d="M5 5h8v8H5z" fill="#111" strokeWidth="2" /><path d="M1 1h7v7H1z" fill="#aaa" stroke="#777" /></Svg>
                <Svg s={15}><path d="M2 7h8v6H2z" fill="#f4b63c" stroke="#c98616" /><path d="M8 7V2h5v4" stroke="#c9a35a" strokeWidth="1.500" /></Svg>
                <Svg s={12}><path d="M1 1h10v10H1z" fill="#fff" stroke="#111" /></Svg>
                <select aria-label="도면층" defaultValue="0"><option>0</option></select>
                <DropMark><Caret /></DropMark>
              </LayerBox>
              <IconGrid $cols="repeat(9, 1fr)">
                {layerMarks.map((_, i) => <Small key={i} label={`도면층 도구 ${i + 1}`}><LayerI n={i} /></Small>)}
              </IconGrid>
            </LayerTools>
          </PanelBody>
          <PanelTitle>도면층</PanelTitle>
        </Panel>
        <TallTool $w={35}><BrushI />특성<Caret /></TallTool>
        <TallTool $w={46}><RulerI />유틸리티<Caret /></TallTool>
        <TallTool $w={45}><ClipI />클립보드<Caret /></TallTool>
      </Ribbon>
      <Work>
        <Props>
          <PropsTitle>특성</PropsTitle>
          <PickRow>
            <PickBox><select aria-label="선택 요소" defaultValue="n"><option value="n">선택 요소가 없습니다</option></select><Caret c="#000" /></PickBox>
            <PickButton aria-label="객체 선택"><Svg><path d="M1 1h14v14H1z" stroke="#2949a8" strokeDasharray="1 1" /><path d="M4 4h8v8H4z" fill="#bcd" stroke="#58a" strokeDasharray="2 1" /><path d="M8 4v8M4 8h8" stroke="#243" /></Svg></PickButton>
            <PickButton aria-label="빠른 선택"><Svg><circle cx="6" cy="8" r="5" fill="#cad9ee" stroke="#6684aa" /><path d="M8 1h7v7H8z" fill="#5fb88a" stroke="none" /><path d="M8 4v10l2-3 3 4 1-1-2-4h3z" fill="#fff" stroke="#555" /></Svg></PickButton>
            <PickButton aria-label="필터"><Svg><path d="M1 2h11L8 7v7l-3-2V7z" fill="#4a86be" stroke="#285c91" /><Bolt x={9} y={5} /></Svg></PickButton>
          </PickRow>
          {groups.map(([name, rows]) => (
            <Group key={name}>
              <GroupHead>{name}<Caret c="#000" up /></GroupHead>
              <Grid><tbody>{rows.map(([k, v, dim]) => <tr key={k}><th scope="row">{k}</th><Value $dim={dim}>{v}</Value></tr>)}</tbody></Grid>
            </Group>
          ))}
        </Props>
        <Doc>
          <DocTabs>
            <DocTab>Drawing1.dwg</DocTab>
            <DocTab $active>Sample_P&amp;ID_B.dwg (읽기 전용)<Svg s={7}><path d="M0 0l7 7M7 0L0 7" strokeWidth="1.500" /></Svg></DocTab>
          </DocTabs>
          <Canvas><Drawing /></Canvas>
          <LayoutTabs>
            {["M3 2v8M9 2v8L5 6z", "M8 2v8L4 6z", "M4 2v8l4-4z", "M9 2v8M3 2v8l4-4z"].map((d, i) => (
              <NavButton key={d} aria-label={["First", "Previous", "Next", "Last"][i]}><Svg s={12}><path d={d} fill="#000" stroke="#000" /></Svg></NavButton>
            ))}
            <Svg w={8} h={15}><path d="M1 0l6 14" stroke="#222" /></Svg>
            <LayoutTab $active>Model</LayoutTab>
            <Svg w={14} h={15}><path d="M9 0L2 14M5 8l3 6" stroke="#222" /></Svg>
            <LayoutTab>Layout1</LayoutTab>
            <Svg w={14} h={15}><path d="M12 0L5 14" stroke="#222" strokeWidth="1.500" /></Svg>
          </LayoutTabs>
        </Doc>
      </Work>
      <Command>
        <CommandGrip>
          <Svg w={5} h={6}><path d="M-2 0l5 6M3 0l-5 6" /></Svg>
          <Svg w={5} h={5}><path d="M-3 0h7L0 4z" fill="#fff" stroke="none" /></Svg>
        </CommandGrip>
        <History>{"파일 버전: R21 (2007) release\n명령:"}<Svg w={4} h={26}><path d="M1 9l3-4M1 18l3 4" stroke="#444" /></Svg></History>
        <Prompt>명령:<input aria-label="명령" /></Prompt>
      </Command>
      <Status>
        <Ready>준비</Ready>
        <StatusCell $w={8} aria-label="Grip" />
        <StatusCell $w={118} $coord>1494.2427,602.9521,0</StatusCell>
        <StatusCell $w={45}><Svg><path d="M8 2v8M8 8l-6 6M8 8l6 6M8 3l-1 7M8 3l1 7" strokeWidth="2" /></Svg>1:1</StatusCell>
        <StatusCell $w={27} aria-label="Annotation visibility"><Svg s={18}><path d="M9 3v8M9 10l-7 7M9 10l7 7" stroke="#5da4dc" strokeWidth="4" /><circle cx="13" cy="12" r="4" fill="#ff2" stroke="none" /></Svg></StatusCell>
        <StatusCell $w={27} aria-label="Auto scale"><Svg s={18}><path d="M8 4v7M8 10l-6 7M8 10l6 7" stroke="#aaa" strokeWidth="3" /><path d="M15 0l-3 4h2l-2 4 5-5h-2z" fill="#ee3" stroke="none" /></Svg></StatusCell>
        <StatusCell $w={27} aria-label="Snap"><Svg s={18}><path d="M3 4h14M3 9h14M3 14h14" stroke="#ccc" strokeWidth="2" strokeDasharray="2 3" /></Svg></StatusCell>
        <StatusCell $w={27} aria-label="Grid"><Svg s={18}><path d="M5 2v16M9 2v16M14 2v16M1 5h17M1 10h17M1 15h17" stroke="#bbb" strokeWidth="1.500" /></Svg></StatusCell>
        <StatusCell $w={27} aria-label="Ortho"><Svg s={18}><path d="M14 3v13H2M9 16v-5h5" stroke="#bbb" strokeWidth="2" /></Svg></StatusCell>
        <StatusCell $w={23} aria-label="Polar"><Svg s={18}><circle cx="10" cy="10" r="8" stroke="#64b3df" strokeWidth="2" /><circle cx="10" cy="10" r="4" stroke="#64b3df" strokeWidth="2" /><path d="M10 10h8M10 10l7-7" stroke="#e33" strokeWidth="1.500" /></Svg></StatusCell>
      </Status>
    </Shell>
  );
}
